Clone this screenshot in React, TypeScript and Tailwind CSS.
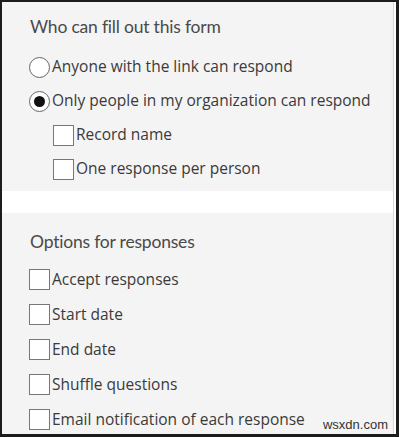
import React from 'react';

function Radio({ checked }: { checked?: boolean }) {
  return (
    <span className="w-[21px] h-[21px] rounded-full border-[1.5px] border-[#666] bg-white flex items-center justify-center shrink-0">
      {checked && <span className="w-[11px] h-[11px] rounded-full bg-[#111]" />}
    </span>
  );
}

function Box() {
  return <span className="w-[21px] h-[21px] border-[1.5px] border-[#777] bg-white shrink-0" />;
}

function Row({ children, label, h }: { children: React.ReactNode; label: string; h: string }) {
  return (
    <div className={`flex items-center gap-[2px] ${h}`}>
      {children}
      <span className="text-[15.5px] text-[#3a3a3a] leading-none">{label}</span>
    </div>
  );
}

export default function App() {
  const options = ['Accept responses', 'Start date', 'End date', 'Shuffle questions', 'Email notification of each response'];

  return (
    <div
      className="w-[400px] h-[437px] bg-white overflow-hidden relative"
      style={{ fontFamily: '"Open Sans", "Noto Sans", sans-serif' }}
    >
      <div className="w-[399px] h-[437px] border-t-2 border-l-2 border-b-[3px] border-r-[3px] border-[#1c1c1c] flex flex-col">
        <div className="flex-1 flex flex-col mr-[2px] border-r border-[#d8d8d8] overflow-hidden">
          {/* Who can fill out */}
          <div className="bg-[#f4f4f4] pt-3 pb-[5px] pl-[27px]">
            <div className="font-['Lato',sans-serif] text-[17.5px] tracking-[-0.2px] leading-[26px] text-[#4a4a4a] pl-[1px] mb-[10px]">Who can fill out this form</div>
            <Row label="Anyone with the link can respond" h="h-[34px]"><Radio /></Row>
            <Row label="Only people in my organization can respond" h="h-[34px]"><Radio checked /></Row>
            <div className="pl-[24px]">
              <Row label="Record name" h="h-[34px]"><Box /></Row>
              <Row label="One response per person" h="h-[34px]"><Box /></Row>
            </div>
          </div>

          <div className="h-[22px] bg-white shrink-0" />

          {/* Options */}
          <div className="bg-[#f4f4f4] flex-1 pt-4 pl-[27px]">
            <div className="font-['Lato',sans-serif] text-[17.5px] tracking-[-0.2px] leading-[26px] text-[#4a4a4a] pl-[1px] mb-[7px]">Options for responses</div>
            {options.map((o) => (
              <Row key={o} label={o} h="h-[35px]"><Box /></Row>
            ))}
          </div>
        </div>
      </div>
      <span className="absolute right-[12px] bottom-[3px] font-['Liberation_Sans',sans-serif] text-[13px] text-[#333]">wsxdn.com</span>
    </div>
  );
}
